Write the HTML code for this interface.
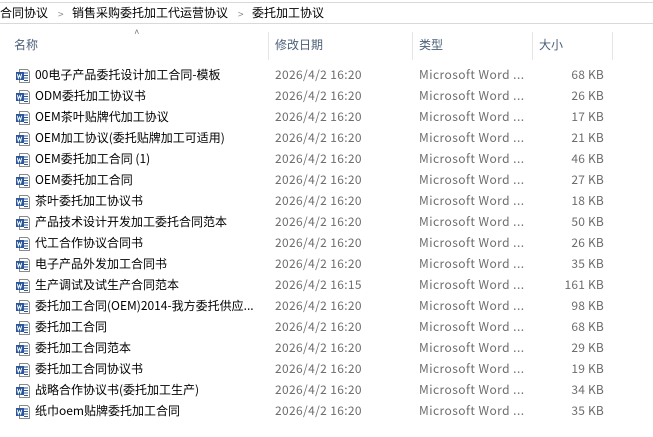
<!DOCTYPE html>
<html><head><meta charset="utf-8"><style>
body{margin:0;width:653px;height:437px;background:#fff;font-family:"Noto Sans CJK SC","Liberation Sans",sans-serif;font-size:12px;overflow:hidden;position:relative}
.bc{position:absolute;left:0;top:2px;width:653px;height:22px;border-top:1px solid #d9d9d9;border-bottom:1px solid #d9d9d9;box-sizing:border-box}
.bc span{position:absolute;top:2px;color:#000;line-height:16px}
.bc .ar{color:#888;font-size:10px;top:3px}
.hd{position:absolute;top:37px;color:#4c607a;line-height:16px}
.sep{position:absolute;top:32px;width:1px;height:28px;background:#e5e5e5}
.row{position:absolute;left:0;width:653px;height:21px}
.row span{line-height:16px}
.row .n{position:absolute;left:35px;top:2px;color:#000}
.row .d{position:absolute;left:275px;top:2px;color:#6d6d6d;letter-spacing:0.35px}
.row .t{position:absolute;left:419px;top:2px;color:#6d6d6d;letter-spacing:0.45px}
.row .s{position:absolute;right:49px;top:2px;color:#6d6d6d;letter-spacing:0.2px}
.row svg{position:absolute;left:15px;top:3px}
</style></head><body>
<div class="bc"><span style="left:0">合同协议</span><span class="ar" style="left:58px">&gt;</span><span style="left:72px">销售采购委托加工代运营协议</span><span class="ar" style="left:238px">&gt;</span><span style="left:252px">委托加工协议</span></div>
<div style="position:absolute;left:134px;top:27px;color:#777;font-size:10px;line-height:12px">^</div>
<div class="hd" style="left:14px">名称</div>
<div class="hd" style="left:275px">修改日期</div>
<div class="hd" style="left:419px">类型</div>
<div class="hd" style="left:539px">大小</div>
<div class="sep" style="left:268px"></div><div class="sep" style="left:412px"></div><div class="sep" style="left:532px"></div><div class="sep" style="left:612px"></div>
<div id="rows"></div>
<script>
var d=[["00电子产品委托设计加工合同-模板","16:20","68 KB"],["ODM委托加工协议书","16:20","26 KB"],["OEM茶叶贴牌代加工协议","16:20","17 KB"],["OEM加工协议(委托贴牌加工可适用)","16:20","21 KB"],["OEM委托加工合同 (1)","16:20","46 KB"],["OEM委托加工合同","16:20","27 KB"],["茶叶委托加工协议书","16:20","18 KB"],["产品技术设计开发加工委托合同范本","16:20","50 KB"],["代工合作协议合同书","16:20","26 KB"],["电子产品外发加工合同书","16:20","35 KB"],["生产调试及试生产合同范本","16:15","161 KB"],["委托加工合同(OEM)2014-我方委托供应...","16:20","98 KB"],["委托加工合同","16:20","68 KB"],["委托加工合同范本","16:20","29 KB"],["委托加工合同协议书","16:20","19 KB"],["战略合作协议书(委托加工生产)","16:20","34 KB"],["纸巾oem贴牌委托加工合同","16:20","35 KB"]];
var ic='<svg width="16" height="16" viewBox="0 0 16 16"><path d="M4.5 1.5h8l2 2v11h-10z" fill="#fff" stroke="#8a8a8a"/><path d="M9 5h4M9 7.5h4M9 10h4M9 12.5h4" stroke="#2b579a"/><rect x="1" y="4" width="8" height="8" fill="#2b579a"/><path d="M2.3 5.8l1 4.4 1.2-3.2 1.2 3.2 1-4.4" stroke="#fff" fill="none" stroke-width="0.9"/></svg>';
var h='';d.forEach(function(r,i){h+='<div class="row" style="top:'+(65+i*21)+'px">'+ic+'<span class="n">'+r[0]+'</span><span class="d">2026/4/2 '+r[1]+'</span><span class="t">Microsoft Word ...</span><span class="s">'+r[2]+'</span></div>';});
document.getElementById('rows').innerHTML=h;
</script>
</body></html>
